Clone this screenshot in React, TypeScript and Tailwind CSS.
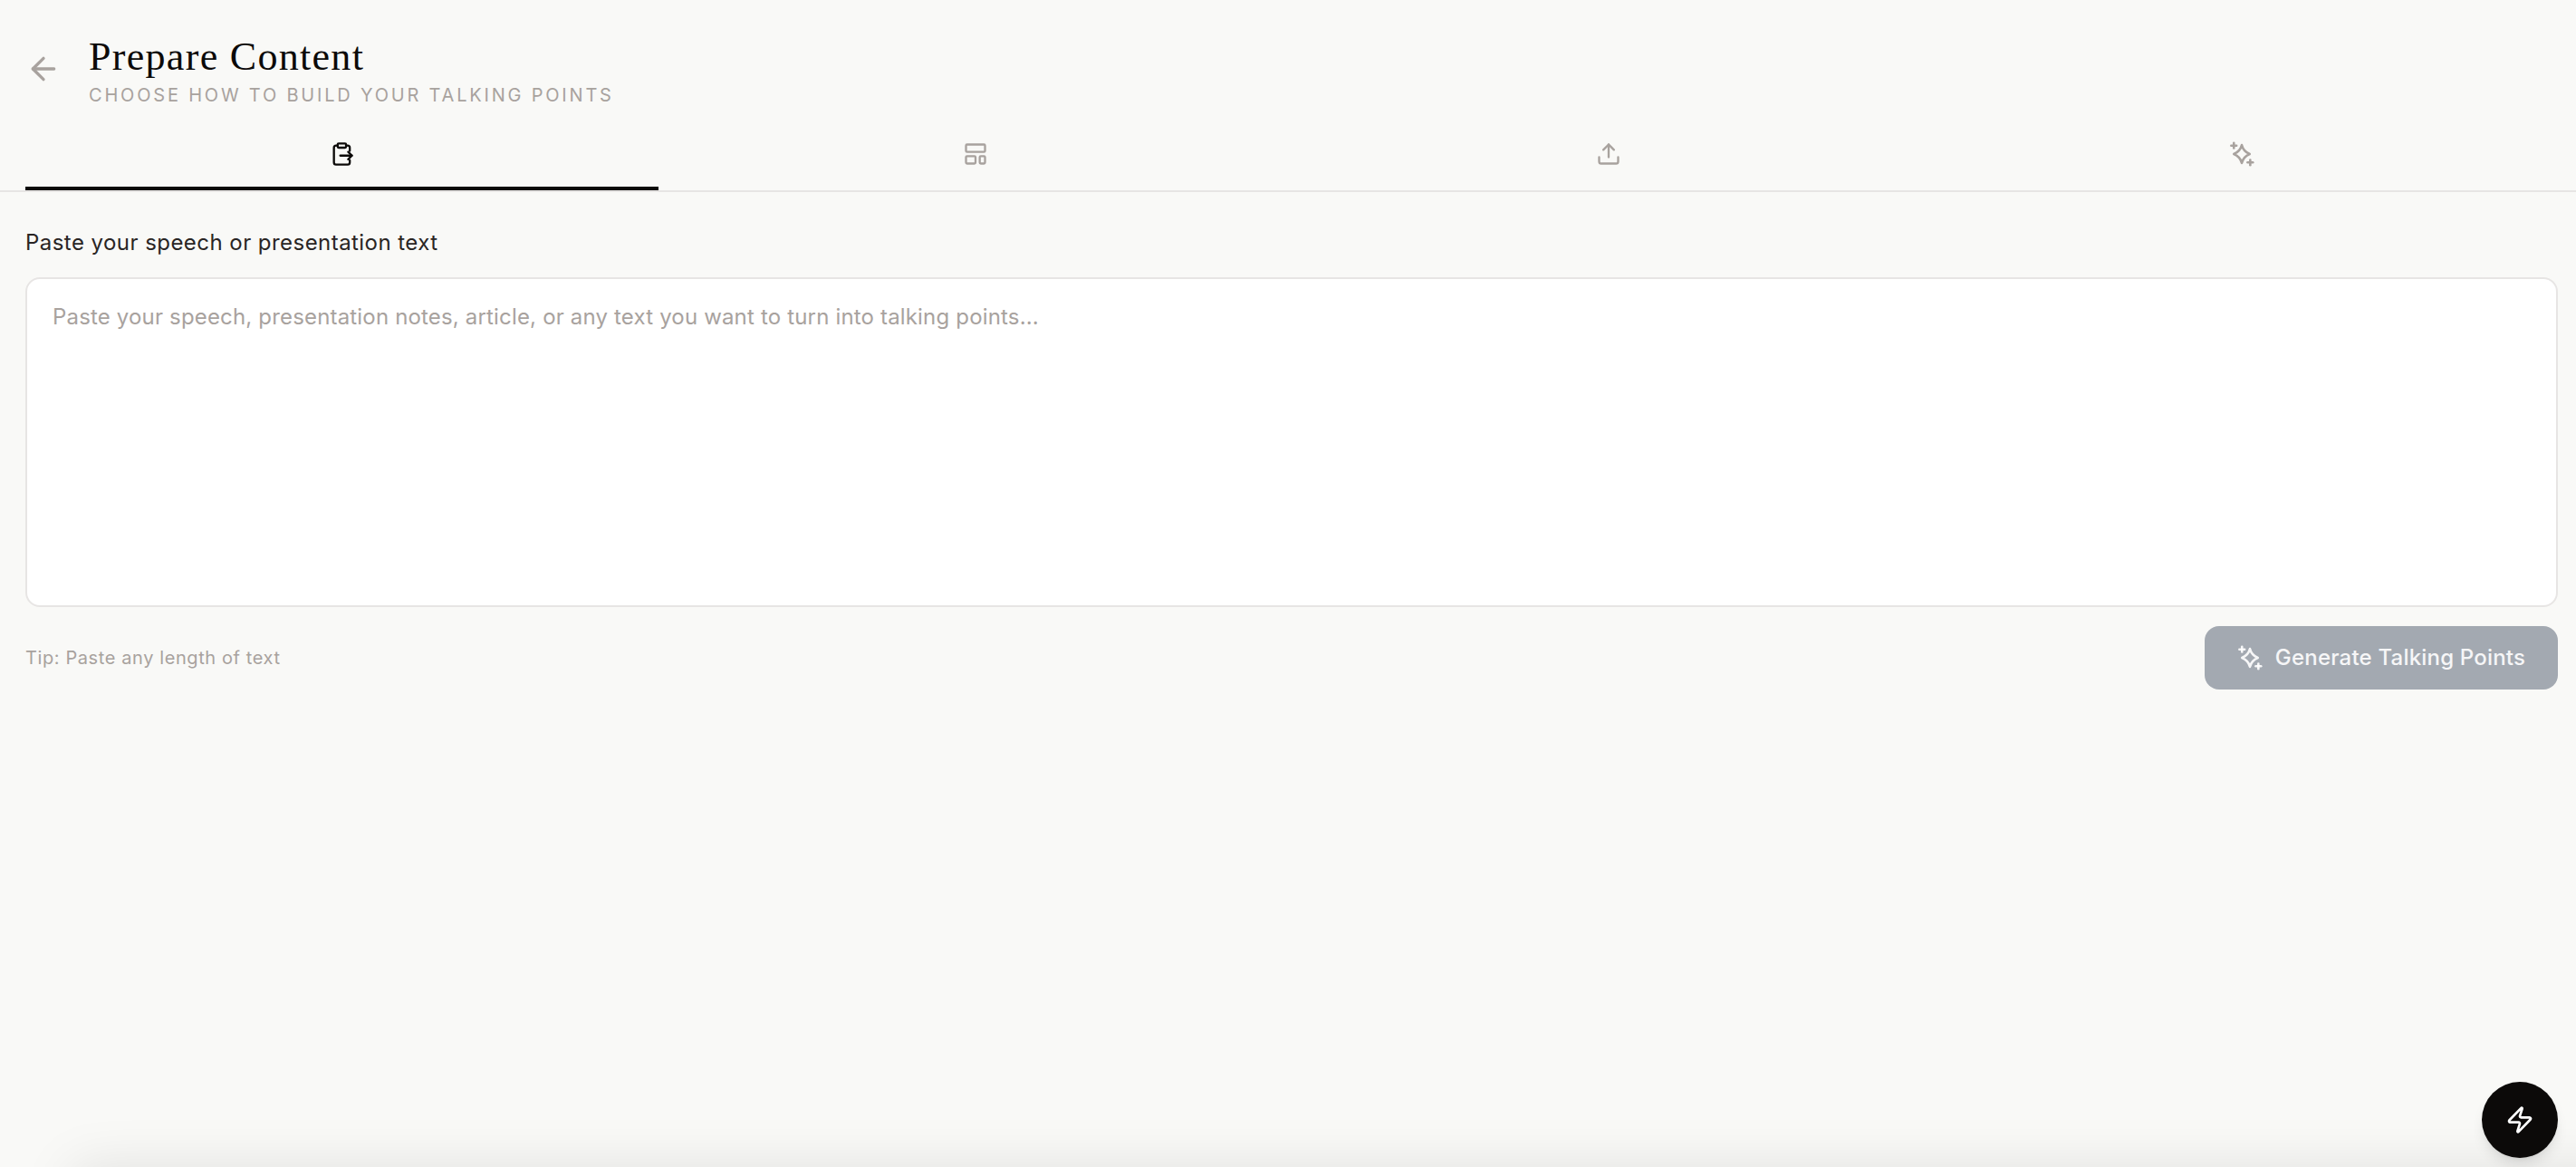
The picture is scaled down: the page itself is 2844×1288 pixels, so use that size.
import { ArrowLeft, LayoutTemplate, Upload, Zap } from 'lucide-react';

function PasteIcon() {
  return (
    <svg width="28" height="28" viewBox="0 0 24 24" fill="none" stroke="currentColor" strokeWidth="2" strokeLinecap="round" strokeLinejoin="round">
      <rect x="7.5" y="2" width="8" height="4" rx="1" />
      <path d="M7.5 4H6a2 2 0 0 0-2 2v14a2 2 0 0 0 2 2h11a2 2 0 0 0 2-2v-2" />
      <path d="M15.5 4H17a2 2 0 0 1 2 2v3" />
      <path d="M10 13.5h11" />
      <path d="m17.5 10 3.5 3.5-3.5 3.5" />
    </svg>
  );
}

function SparkIcon({ size }: { size: number }) {
  return (
    <svg width={size} height={size} viewBox="0 0 24 24" fill="none" stroke="currentColor" strokeWidth="2.2" strokeLinecap="round" strokeLinejoin="round">
      <path d="M12 3.5c1 4 3.5 6.8 7.5 8.5-4 1.7-6.5 4.5-7.5 8.5-1-4-3.500-6.800-7.500-8.500 4-1.700 6.500-4.500 7.500-8.500z" />
      <path d="M4.500 1.500v5" />
      <path d="M2 4h5" />
      <path d="M20 17.500v5" />
      <path d="M17.500 20h5" />
    </svg>
  );
}

export default function App() {
  return (
    <div className="relative flex h-[1288px] flex-col overflow-hidden bg-[#f9f9f7] font-['Inter',sans-serif]">
      <header className="flex items-center gap-[30px] pl-[28px] pt-[38px]">
        <ArrowLeft className="mb-[6px] h-[40px] w-[40px] text-[#a8a29e]" strokeWidth={2} />
        <div className="flex flex-col">
          <h1 className="font-['Liberation_Serif',serif] text-[44px] leading-[50px] tracking-[1.3px] text-[#0c0a09]">Prepare Content</h1>
          <p className="mt-[2px] text-[20px] leading-[30px] tracking-[2.8px] text-[#a8a29e]">CHOOSE HOW TO BUILD YOUR TALKING POINTS</p>
        </div>
      </header>

      <nav className="mt-[14px] flex border-b-2 border-[#e7e5e4] pr-[20px] pl-[28px]">
        <button className="flex h-[76px] flex-1 items-center justify-center border-b-4 border-[#0c0a09] text-[#0c0a09]">
          <PasteIcon />
        </button>
        <button className="flex h-[76px] flex-1 items-center justify-center border-b-4 border-transparent text-[#a8a29e]">
          <LayoutTemplate className="h-[28px] w-[28px]" strokeWidth={2} />
        </button>
        <button className="flex h-[76px] flex-1 items-center justify-center border-b-4 border-transparent text-[#a8a29e]">
          <Upload className="h-[28px] w-[28px]" strokeWidth={2} />
        </button>
        <button className="flex h-[76px] flex-1 items-center justify-center border-b-4 border-transparent text-[#a8a29e]">
          <SparkIcon size={28} />
        </button>
      </nav>

      <main className="flex flex-col pt-[40px] pr-[20px] pl-[28px]">
        <label className="text-[24px] leading-[32px] tracking-[0.45px] text-[#292524]">Paste your speech or presentation text</label>
        <div className="mt-[22px] h-[364px] rounded-[16px] border-2 border-[#e7e5e4] bg-white px-[28px] py-[24px]">
          <p className="text-[24px] leading-[36px] tracking-[0.17px] text-[#a8a29e]">Paste your speech, presentation notes, article, or any text you want to turn into talking points...</p>
        </div>
        <div className="mt-[21px] flex items-center justify-between">
          <span className="text-[20px] tracking-[0.6px] text-[#a8a29e]">Tip: Paste any length of text</span>
          <button className="flex h-[70px] w-[390px] items-center justify-center gap-[14px] rounded-[16px] bg-[#a3a9b1] text-[24px] font-medium tracking-[0.2px] text-white/90">
            <SparkIcon size={28} />
            Generate Talking Points
          </button>
        </div>
      </main>

      <div className="absolute right-[-80px] bottom-[-70px] left-[80px] h-[70px] shadow-[0_0_60px_rgba(0,0,0,0.1)]" />

      <button className="absolute right-[20px] bottom-[10px] flex h-[84px] w-[84px] items-center justify-center rounded-full bg-[#0c0a09] text-white shadow-lg">
        <Zap className="h-[32px] w-[32px]" strokeWidth={2} />
      </button>
    </div>
  );
}
